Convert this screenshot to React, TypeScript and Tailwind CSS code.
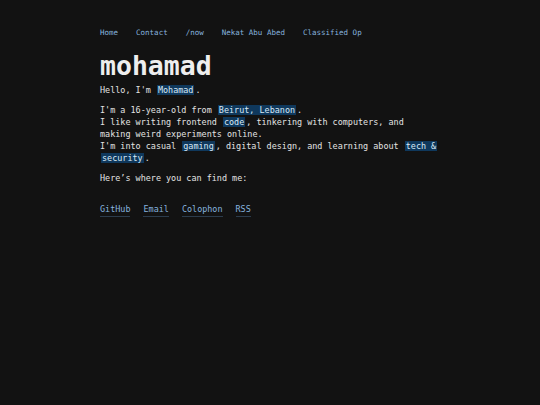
import React from 'react';

const mono = { fontFamily: '"DejaVu Sans Mono", monospace' };

const Mark: React.FC<{ children: React.ReactNode }> = ({ children }) => (
  <span className="bg-[#0f385c] text-[#d8e8f7] px-[1px] mx-[1px] [box-decoration-break:clone]">{children}</span>
);

const navItems = ['Home', 'Contact', '/now', 'Nekat Abu Abed', 'Classified Op'];
const links = ['GitHub', 'Email', 'Colophon', 'RSS'];

export default function App() {
  return (
    <div className="w-full min-h-[405px] bg-[#121212] text-[#e2e2e2]" style={mono}>
      <div className="w-[339px] ml-[100px] pt-[27px]">
        <nav className="flex gap-[18px] text-[7.5px] leading-[12px] text-[#86b3df]">
          {navItems.map((item) => (
            <a key={item} href="#">{item}</a>
          ))}
        </nav>

        <h1 className="mt-[11px] text-[26.5px] leading-[31px] font-bold text-[#eeeeee]">mohamad</h1>

        <p className="mt-[3px] text-[8.45px] leading-[12px]">
          Hello, I'm <Mark>Mohamad</Mark>.
        </p>

        <p className="mt-[8px] text-[8.45px] leading-[12px]">
          I'm a 16-year-old from <Mark>Beirut, Lebanon</Mark>.
          <br />
          I like writing frontend <Mark>code</Mark>, tinkering with computers, and making weird experiments online.
          <br />
          I'm into casual <Mark>gaming</Mark>, digital design, and learning about <Mark>tech &amp; security</Mark>.
        </p>

        <p className="mt-[8px] text-[8.45px] leading-[12px]">Here’s where you can find me:</p>

        <div className="mt-[19px] flex gap-[13px] text-[8.45px] leading-[12px] text-[#86b3df]">
          {links.map((l) => (
            <a key={l} href="#" className="border-b border-[#2c3c4c] pb-[1px]">{l}</a>
          ))}
        </div>
      </div>
    </div>
  );
}
